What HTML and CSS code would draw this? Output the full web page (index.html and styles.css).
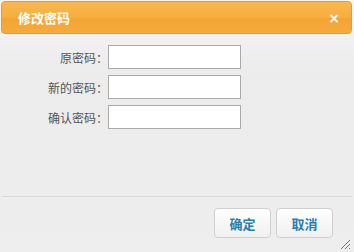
FILE: index.html
```html
<!DOCTYPE html>
<html lang="zh-CN">
<head>
  <meta charset="UTF-8" />
  <title>修改密码</title>
  <link rel="stylesheet" href="styles.css">
</head>
<body>
  <div class="dialog">
    <div class="dialog-head">
      <span class="dialog-title">修改密码</span>
      <span class="dialog-close">×</span>
    </div>
    <div class="dialog-body">
      <form class="pwd-form">
        <div class="row">
          <label for="old">原密码：</label>
          <input type="password" id="old" />
        </div>
        <div class="row">
          <label for="new">新的密码：</label>
          <input type="password" id="new" />
        </div>
        <div class="row">
          <label for="confirm">确认密码：</label>
          <input type="password" id="confirm" />
        </div>
      </form>
    </div>
    <div class="dialog-foot">
      <button type="button" class="btn">确定</button>
      <button type="button" class="btn">取消</button>
      <svg class="grip" width="11" height="11" viewBox="0 0 11 11">
        <path d="M10 1 L1 10 M10 5 L5 10 M10 9 L9 10" stroke="#777" stroke-width="1" fill="none" />
      </svg>
    </div>
  </div>
</body>
</html>
```

FILE: styles.css
```css
* {
  box-sizing: border-box;
  margin: 0;
  padding: 0;
}

body {
  width: 354px;
  height: 252px;
  background-color: #fafafa;
  font-family: "Noto Sans CJK SC", sans-serif;
  overflow: hidden;
}

.dialog {
  height: 252px;
  display: flex;
  flex-direction: column;
  background: linear-gradient(#f6f6f6, #ececec 70px, #eeeeee);
}

.dialog-head {
  margin: 1px 2px 0 1px;
  height: 33px;
  border: 1px solid #e99a2c;
  border-radius: 4px;
  background: linear-gradient(#fab84e, #f6ae3f 50%, #f3a432 52%, #f6ab3d);
  display: flex;
  align-items: center;
  justify-content: space-between;
  padding: 0 11px 0 16px;
  color: #fff;
}

.dialog-title {
  font-size: 13px;
  font-weight: bold;
}

.dialog-close {
  font-family: "DejaVu Sans", sans-serif;
  font-size: 14px;
  font-weight: bold;
  line-height: 1;
}

.dialog-body {
  flex: 1;
  padding-top: 11px;
}

.pwd-form {
  display: flex;
  flex-direction: column;
  gap: 6px;
}

.row {
  display: flex;
  align-items: center;
}

.row label {
  width: 108px;
  text-align: right;
  font-size: 12px;
  color: #555;
}

.row input {
  width: 133px;
  height: 24px;
  border: 1px solid #aaa;
  background-color: #fff;
  outline: none;
}

.dialog-foot {
  height: 56px;
  margin: 0 2px;
  border-top: 1px solid #d8d8d8;
  display: flex;
  justify-content: flex-end;
  align-items: flex-start;
  gap: 5px;
  padding: 11px 19px 0 0;
  position: relative;
}

.btn {
  width: 57px;
  height: 30px;
  border: 1px solid #cfcfcf;
  border-radius: 4px;
  background: linear-gradient(#ffffff, #f0f0f0);
  color: #2a7db3;
  font-family: "Noto Sans CJK SC", sans-serif;
  font-size: 13px;
  font-weight: bold;
  cursor: pointer;
}

.grip {
  position: absolute;
  right: 1px;
  bottom: 2px;
}
```
